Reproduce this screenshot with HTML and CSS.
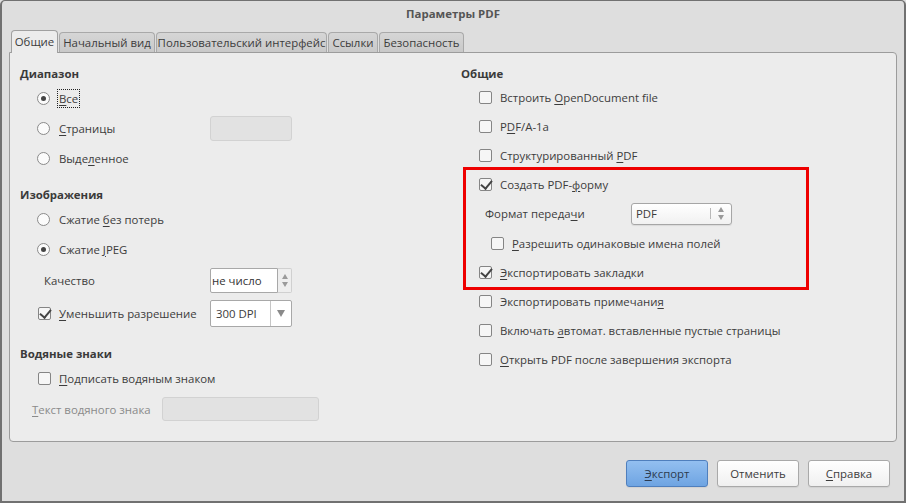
FILE: index.html
```html
<!DOCTYPE html>
<html lang="ru">
<head>
<meta charset="utf-8">
<title>Параметры PDF</title>
<link rel="stylesheet" href="styles.css">
</head>
<body>
<div class="window">
  <div class="title">Параметры PDF</div>
  <div class="tabs">
    <div class="tab active">Общие</div>
    <div class="tab">Начальный вид</div>
    <div class="tab">Пользовательский интерфейс</div>
    <div class="tab">Ссылки</div>
    <div class="tab">Безопасность</div>
  </div>
  <div class="panel">
    <div class="col left">
      <div class="hdr">Диапазон</div>
      <div class="row r30 ind16"><span class="radio on"></span><span class="lbl focus"><u>В</u>се</span></div>
      <div class="row r30 split">
        <div class="cell ind16"><span class="radio"></span><span class="lbl"><u>С</u>траницы</span></div>
        <div class="field disabled"></div>
      </div>
      <div class="row r30 ind16"><span class="radio"></span><span class="lbl">Выде<u>л</u>енное</span></div>

      <div class="hdr mt11">Изображения</div>
      <div class="row r30 ind16"><span class="radio"></span><span class="lbl">Сжатие <u>б</u>ез потерь</span></div>
      <div class="row r30 ind16"><span class="radio on"></span><span class="lbl">Сжатие <u>J</u>PEG</span></div>
      <div class="row r32 split">
        <div class="cell ind24"><span class="plain">Качество</span></div>
        <div class="spin">
          <div class="spin-field">не число</div>
          <div class="spin-btns"><span class="arr up"></span><span class="arr down"></span></div>
        </div>
      </div>
      <div class="row r34 split">
        <div class="cell ind17"><span class="check on"></span><span class="lbl"><u>У</u>меньшить разрешение</span></div>
        <div class="combo">
          <div class="combo-text">300 DPI</div>
          <div class="combo-btn"><span class="arr down big"></span></div>
        </div>
      </div>

      <div class="hdr mt13">Водяные знаки</div>
      <div class="row r30 ind17"><span class="check"></span><span class="lbl"><u>П</u>одписать водяным знаком</span></div>
      <div class="row r32 split wm">
        <div class="cell ind12"><span class="plain grey"><u>Т</u>екст водяного знака</span></div>
        <div class="field disabled"></div>
      </div>
    </div>

    <div class="col right">
      <div class="hdr">Общие</div>
      <div class="row r29 ind17"><span class="check"></span><span class="lbl r">Встроить <u>O</u>penDocument file</span></div>
      <div class="row r29 ind17"><span class="check"></span><span class="lbl r">P<u>D</u>F/A-1a</span></div>
      <div class="row r29 ind17"><span class="check"></span><span class="lbl r">Структурированный <u>P</u>DF</span></div>
      <div class="row r29 ind17"><span class="check on"></span><span class="lbl r">Создать PDF-<u>ф</u>орму</span></div>
      <div class="row r29 split fmt">
        <div class="cell ind24"><span class="plain">Формат переда<u>ч</u>и</span></div>
        <div class="pcombo">
          <div class="pcombo-text">PDF</div>
          <div class="pcombo-sep"></div>
          <div class="spin-btns plain-btns"><span class="arr up"></span><span class="arr down"></span></div>
        </div>
      </div>
      <div class="row r30 ind29"><span class="check"></span><span class="lbl r"><u>Р</u>азрешить одинаковые имена полей</span></div>
      <div class="row r29 ind17"><span class="check on"></span><span class="lbl r"><u>Э</u>кспортировать закладки</span></div>
      <div class="row r29 ind17"><span class="check"></span><span class="lbl r">Экспортировать примечани<u>я</u></span></div>
      <div class="row r29 ind17"><span class="check"></span><span class="lbl r">Включать <u>а</u>втомат. вставленные пустые страницы</span></div>
      <div class="row r29 ind17"><span class="check"></span><span class="lbl r"><u>О</u>ткрыть PDF после завершения экспорта</span></div>
    </div>
    <div class="redbox"></div>
  </div>
  <div class="buttons">
    <div class="btn primary"><u>Э</u>кспорт</div>
    <div class="btn">Отменить</div>
    <div class="btn"><u>С</u>правка</div>
  </div>
</div>
</body>
</html>
```

FILE: styles.css
```css
* { box-sizing: border-box; }
html, body { margin: 0; padding: 0; }
body {
  width: 906px;
  height: 503px;
  overflow: hidden;
  font-family: "Open Sans", "Noto Sans", "DejaVu Sans", sans-serif;
  font-size: 11.4px;
  color: #3c3c3c;
  background: #dedede;
}
u { text-decoration: underline; text-decoration-thickness: 1px; text-underline-offset: 2px; }

.window {
  width: 906px;
  height: 503px;
  border: 2px solid #717171;
  border-top-width: 1px;
  border-radius: 5px 5px 0 0;
  background: #dedede;
  display: flex;
  flex-direction: column;
}
.title {
  height: 29px;
  display: flex;
  align-items: center;
  justify-content: center;
  font-weight: bold;
  color: #555;
  padding-bottom: 4px;
}
.tabs {
  height: 22px;
  display: flex;
  align-items: flex-end;
  gap: 1px;
  padding-left: 9px;
  position: relative;
  z-index: 2;
}
.tab {
  height: 20px;
  padding: 0 4px;
  display: flex;
  align-items: center;
  justify-content: center;
  border: 1px solid #a9a9a9;
  border-bottom: none;
  border-radius: 4px 4px 0 0;
  background: linear-gradient(#d6d6d6, #c9c9c9);
  color: #3c3c3c;
  white-space: nowrap;
}
.tab:nth-child(2) { width: 96px; }
.tab:nth-child(3) { width: 171px; }
.tab:nth-child(4) { width: 50px; }
.tab:nth-child(5) { width: 85px; }
.tab.active {
  width: 47px;
  height: 23px;
  margin-bottom: -1px;
  background: #ececec;
  border-color: #a0a0a0;
  padding-bottom: 1px;
}

.panel {
  margin-left: 7px;
  width: 888px;
  height: 390px;
  background: #ececec;
  border: 1px solid #9c9c9c;
  border-radius: 0 4px 4px 4px;
  display: grid;
  grid-template-columns: 441px 1fr;
  padding: 10px 0 0 10px;
  position: relative;
  z-index: 1;
}
.col { display: flex; flex-direction: column; }

.hdr {
  height: 20px;
  display: flex;
  align-items: center;
  font-weight: bold;
  color: #3a3a3a;
}
.mt11 { margin-top: 11px; }
.mt13 { margin-top: 13px; }

.row { display: flex; align-items: center; }
.r29 { height: 29px; }
.r30 { height: 30px; }
.r32 { height: 32px; }
.r34 { height: 34px; }
.ind12 { padding-left: 12px; }
.ind16 { padding-left: 16px; }
.ind17 { padding-left: 17px; }
.ind24 { padding-left: 24px; }
.ind29 { padding-left: 29px; }
.row.split { display: grid; grid-template-columns: 190px auto; align-items: center; }
.row.split.wm { grid-template-columns: 142px auto; }
.row.split.fmt { grid-template-columns: 170px auto; }
.cell { display: flex; align-items: center; }

.radio {
  width: 13px;
  height: 13px;
  border: 1px solid #8a8a8a;
  border-radius: 50%;
  background: #fbfbfb;
  margin: 0 9px 0 1px;
  display: inline-flex;
  align-items: center;
  justify-content: center;
  flex: none;
}
.radio.on::after {
  content: "";
  width: 5px;
  height: 5px;
  border-radius: 50%;
  background: #444;
}
.check {
  width: 13px;
  height: 13px;
  border: 1px solid #858585;
  border-radius: 2px;
  background: #f6f6f6;
  margin: 0 8px 0 1px;
  position: relative;
  flex: none;
}
.check.on::after {
  content: "";
  position: absolute;
  left: 3px;
  top: -1px;
  width: 5px;
  height: 9px;
  border-right: 2px solid #444;
  border-bottom: 2px solid #444;
  transform: rotate(40deg);
}
.lbl { white-space: nowrap; }
.focus { outline: 1px dotted #222; outline-offset: 0; padding: 0 1px; margin-left: -1px; line-height: 17px; }
.plain { white-space: nowrap; }
.grey { color: #8a8a8a; }

.field {
  height: 25px;
  border: 1px solid #d2d2d2;
  border-radius: 3px;
  background: #e2e2e2;
}
.row.split .field { width: 82px; }
.row.split.wm .field { width: 157px; height: 24px; }

.spin {
  width: 82px;
  height: 25px;
  display: flex;
}
.spin-field {
  width: 68px;
  height: 25px;
  background: #fff;
  border: 1px solid #a8a8a8;
  border-radius: 2px 0 0 2px;
  display: flex;
  align-items: center;
  padding-left: 1px;
  color: #333;
  white-space: nowrap;
  overflow: hidden;
}
.spin-btns {
  width: 14px;
  height: 25px;
  display: flex;
  flex-direction: column;
  align-items: center;
  justify-content: center;
  gap: 3px;
  background: #eeeeee;
  border: 1px solid #d0d0d0;
  border-left: none;
  border-radius: 0 2px 2px 0;
}
.arr { width: 0; height: 0; border-left: 3px solid transparent; border-right: 3px solid transparent; }
.arr.up { border-bottom: 5px solid #9a9a9a; }
.arr.down { border-top: 5px solid #9a9a9a; }
.arr.big { border-left-width: 4px; border-right-width: 4px; border-top-width: 7px; border-top-color: #8a8a8a; }

.combo {
  width: 82px;
  height: 27px;
  display: flex;
  background: #fff;
  border: 1px solid #a8a8a8;
  border-radius: 2px;
}
.combo-text {
  width: 60px;
  display: flex;
  align-items: center;
  padding-left: 5px;
  border-right: 1px solid #c6c6c6;
  white-space: nowrap;
}
.combo-btn { flex: 1; display: flex; align-items: center; justify-content: center; }

.pcombo {
  width: 101px;
  height: 22px;
  display: flex;
  align-items: center;
  border: 1px solid #a6a6a6;
  border-radius: 3px;
  background: linear-gradient(#ffffff, #f1f1f1);
  box-shadow: 0 1px 1px rgba(0,0,0,0.08);
}
.pcombo-text { width: 78px; padding-left: 4px; white-space: nowrap; }
.pcombo-sep { width: 1px; height: 11px; background: #b8b8b8; }
.plain-btns { background: transparent; border: none; width: 20px; height: 20px; gap: 3px; }

.redbox {
  position: absolute;
  left: 453px;
  top: 114px;
  width: 346px;
  height: 123px;
  border: 3px solid #ee0000;
  pointer-events: none;
}

.buttons {
  height: 58px;
  display: flex;
  justify-content: flex-end;
  align-items: flex-start;
  gap: 9px;
  padding: 18px 14px 0 0;
}
.btn {
  width: 82px;
  height: 27px;
  display: flex;
  align-items: center;
  justify-content: center;
  border: 1px solid #a9a9a9;
  border-radius: 3px;
  background: linear-gradient(#ffffff, #f0f0f0);
  color: #3c3c3c;
  box-shadow: 0 1px 1px rgba(0,0,0,0.06);
}
.btn.primary {
  background: linear-gradient(#93bff0, #6ea4e2);
  border-color: #4f7fbd;
  color: #2d3b4f;
}
```
